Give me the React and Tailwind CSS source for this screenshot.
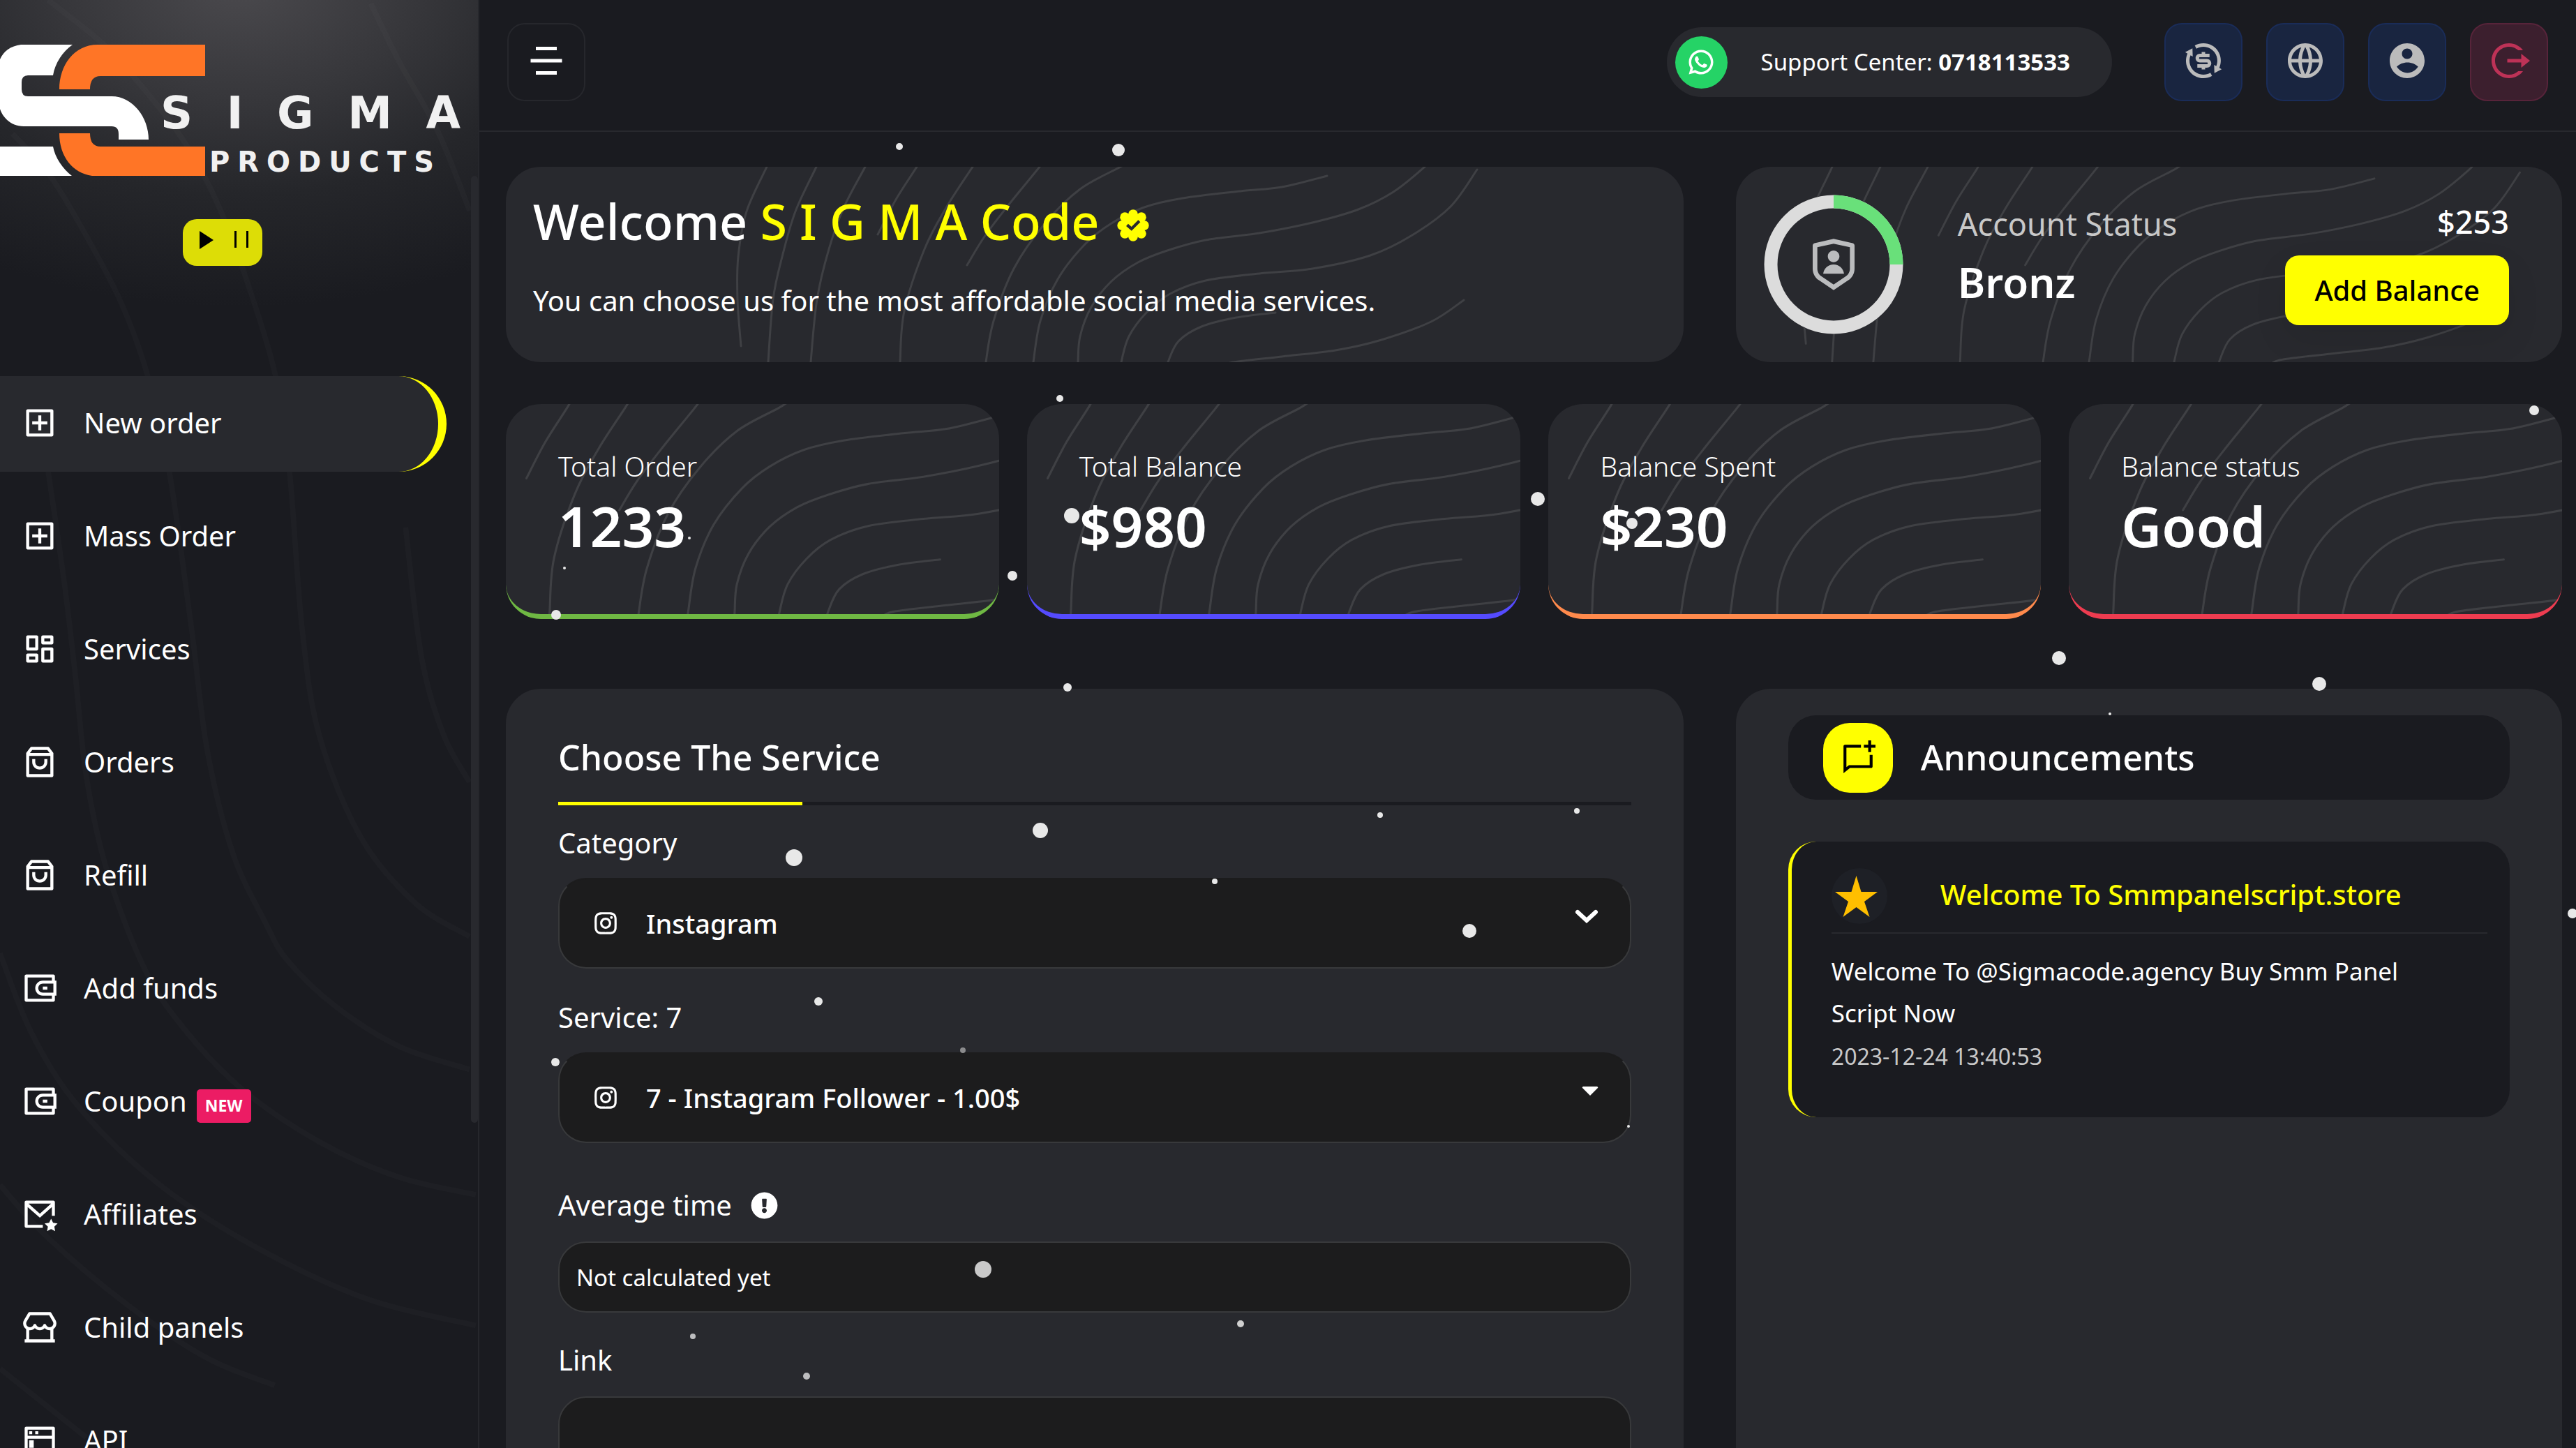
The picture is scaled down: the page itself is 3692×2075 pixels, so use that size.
import React from "react";
import {
  RiAddBoxLine, RiDashboardLine, RiShoppingBag3Line, RiWallet3Line, RiMailStarLine, RiStore2Line,
  RiTerminalWindowLine, RiMenu5Fill, RiWhatsappLine, RiExchangeDollarLine, RiGlobalLine, RiAccountCircleFill,
  RiLogoutCircleRLine, RiShieldUserLine, RiChatNewLine, RiInstagramLine,
} from "react-icons/ri";
import { FaExclamationCircle } from "react-icons/fa";

function smooth(points) {
  let d = `M${points[0][0]} ${points[0][1]}`;
  for (let i = 0; i < points.length - 1; i++) {
    const p0 = points[i - 1] || points[i];
    const p1 = points[i];
    const p2 = points[i + 1];
    const p3 = points[i + 2] || p2;
    d += ` C${p1[0] + (p2[0] - p0[0]) / 6} ${p1[1] + (p2[1] - p0[1]) / 6} ${p2[0] - (p3[0] - p1[0]) / 6} ${p2[1] - (p3[1] - p1[1]) / 6} ${p2[0]} ${p2[1]}`;
  }
  return d;
}

const CARD_LINES = [
  [[-465, -152], [-470, -140], [-499, -76], [-511, -11], [-512, 50], [-507, 117]],
  [[-394, -152], [-399, -140], [-429, -76], [-448, -11], [-461, 50], [-468, 140], [-468, 152]],
  [[-324, -152], [-329, -140], [-359, -83], [-381, -22], [-398, 50], [-407, 140], [-407, 152]],
  [[-249, -152], [-255, -140], [-285, -93], [-311, -43]],
  [[-168, -152], [-175, -140], [-212, -83], [-244, -22], [-273, 67], [-279, 140], [-279, 152]],
  [[-71, -152], [-79, -140], [-123, -86], [-158, -40], [-183, 1]],
  [[53, -151], [37, -140], [-21, -108], [-72, -58], [-116, 6], [-145, 81], [-156, 140], [-156, 152]],
  [[333, -127], [268, -111], [208, -105], [126, -95], [71, -82], [24, -59], [-14, -29], [-53, 21], [-78, 81], [-88, 140], [-89, 152]],
  [[480, -150], [473, -140], [428, -104], [378, -79], [312, -60], [236, -45], [159, -35], [104, -20], [62, -3], [24, 24], [-5, 61], [-21, 103], [-24, 140], [-24, 152]],
  [[548, -136], [510, -83], [455, -42], [395, -13], [312, 6], [236, 13], [159, 23], [108, 42], [75, 68], [49, 103], [38, 140], [37, 152]],
  [[259, 69], [203, 76], [153, 89], [120, 110], [105, 140], [103, 152]],
  [[529, 51], [482, 82], [411, 108], [345, 123], [268, 132], [194, 141], [175, 152]],
];

const SIDE_LINES = [
  [[69, 0], [147, 62], [197, 116], [257, 192], [294, 254], [321, 312], [354, 401], [395, 536], [416, 676], [434, 901], [459, 1057], [519, 1204], [597, 1298], [675, 1346]],
  [[533, 5], [574, 89], [629, 188], [675, 303]],
  [[18, 192], [73, 254], [129, 348], [175, 437], [211, 536], [243, 676], [275, 901], [298, 1079], [335, 1227], [381, 1325], [413, 1380], [482, 1446], [574, 1504], [675, 1537]],
  [[69, 676], [92, 834], [108, 968], [124, 1115], [152, 1245], [202, 1380], [253, 1464], [344, 1562], [459, 1641], [574, 1692], [684, 1717]],
  [[0, 1370], [46, 1486], [115, 1593], [230, 1703], [367, 1792], [528, 1867], [684, 1905]],
  [[0, 1703], [69, 1779], [184, 1876], [298, 1952], [395, 1991]],
  [[0, 1967], [69, 2022], [124, 2066]],
  [[583, 758], [606, 945], [638, 1057], [675, 1124]],
];

const SNOW = [
  [1289, 210, 5], [1603, 215, 9], [1519, 571, 5], [1536, 739, 11], [1451, 825, 7], [988, 771, 2], [809, 814, 2],
  [797, 881, 7], [1530, 985, 6], [2204, 715, 10], [2339, 750, 8], [2951, 943, 10], [3324, 980, 10], [3632, 588, 7],
  [1138, 1229, 12], [1491, 1190, 11], [1173, 1435, 6], [1380, 1505, 4, "#8b8b8d"], [796, 1522, 6],
  [1409, 1819, 12, "#c9c9c9"], [993, 1915, 4, "#bdbdbf"], [1156, 1972, 5, "#bdbdbf"], [1978, 1168, 4], [2260, 1162, 4],
  [1741, 1263, 4], [2106, 1334, 10], [1778, 1897, 5, "#d0d0d0"], [2334, 1614, 2], [3024, 1023, 2], [3687, 1309, 7],
];

const NAV = [
  ["New order", RiAddBoxLine], ["Mass Order", RiAddBoxLine], ["Services", RiDashboardLine], ["Orders", RiShoppingBag3Line],
  ["Refill", RiShoppingBag3Line], ["Add funds", RiWallet3Line], ["Coupon", RiWallet3Line, "NEW"],
  ["Affiliates", RiMailStarLine], ["Child panels", RiStore2Line], ["API", RiTerminalWindowLine],
];

const STATS = [
  ["Total Order", "1233", "border-[#6fb843]"], ["Total Balance", "$980", "border-[#554bff]"],
  ["Balance Spent", "$230", "border-[#ff8a4c]"], ["Balance status", "Good", "border-[#ee3c50]"],
];

function Contours({ className }) {
  return (
    <svg viewBox="-600 -160 1200 320" aria-hidden="true" className={`pointer-events-none absolute top-1/2 left-1/2 max-w-none -translate-x-1/2 -translate-y-1/2 ${className}`}>
      <g fill="none" stroke="#3f4044" strokeWidth="3" strokeLinecap="round">
        {CARD_LINES.map((l, i) => <path key={i} d={smooth(l)} />)}
      </g>
    </svg>
  );
}

function VerifiedBadge({ className }) {
  const lobes = [[0, -48], [0, 48], [-48, 0], [48, 0], [36, 36], [-36, 36], [36, -36], [-36, -36]];
  return (
    <svg viewBox="-70 -70 140 140" aria-hidden="true" className={className}>
      <g fill="#ffff00">
        <circle r="52" />
        {lobes.map(([x, y]) => <circle key={`${x},${y}`} cx={x} cy={y} r="21" />)}
      </g>
      <path d="M-26 -2L-7 15L27 -19" fill="none" stroke="#28292e" strokeWidth="13" />
    </svg>
  );
}

function Letters({ text, className }) {
  return (
    <span className={`flex justify-between ${className}`}>
      {text.split("").map((c, i) => <span key={i}>{c}</span>)}
    </span>
  );
}

function Sidebar() {
  return (
    <aside className="relative flex h-full w-[687px] shrink-0 flex-col overflow-hidden border-r-2 border-[#26272c] bg-[#1a1b20] bg-[radial-gradient(ellipse_720px_460px_at_50%_-20px,#4a494d_0%,#37373b_35%,#25262a_65%,#1a1b20_100%)]">
      <svg viewBox="0 0 687 2075" aria-hidden="true" className="pointer-events-none absolute top-0 left-0 w-full">
        <g fill="none" stroke="#ffffff" strokeOpacity="0.02" strokeWidth="8">
          {SIDE_LINES.map((l, i) => <path key={i} d={smooth(l)} />)}
        </g>
      </svg>
      <div className="absolute top-[252px] right-0 h-[1357px] w-[10px] rounded-full bg-[#28292e]" />
      <a href="#home" aria-label="Sigma Products" className="relative mt-[64px] flex h-[188px] items-start text-[#f1f1f1]">
        <svg viewBox="0 0 294 188" aria-hidden="true" className="h-[188px] w-[294px] shrink-0">
          <path fill="#fff" d="M30 0H104C90 10 79 26 76 44H40Q31 44 31 54V64Q31 74 40 74H160C190 74 213 104 213 136H170V128Q170 117 160 117H34C14 117 3 102 0 92V21Q8 3 30 0Z" />
          <path fill="#fff" d="M0 146H76C79 162 90 178 103 188H0Z" />
          <path fill="#ff7526" d="M140 0H294V45H144Q129 45 129 64H85C85 30 106 0 140 0Z" />
          <path fill="#ff7526" d="M85 127H129Q129 146 144 146H294V188H132C104 184 85 160 85 127Z" />
        </svg>
        <span className="absolute top-[72px] left-[230px] flex w-[430px] flex-col font-['DejaVu_Sans'] font-bold">
          <Letters text="SIGMA" className="text-[64px] leading-[52px]" />
          <Letters text="PRODUCTS" className="mt-[24px] ml-[70px] w-[322px] text-[40px] leading-[40px]" />
        </span>
      </a>
      <button type="button" aria-label="Play or pause" className="relative mt-[62px] ml-[262px] flex h-[67px] w-[114px] shrink-0 items-start gap-[30px] rounded-[20px] bg-[#dddd06] pt-[17px] pl-[24px]">
        <svg viewBox="0 0 20 26" className="h-[26px] w-[20px]"><path d="M0 0L20 13L0 26Z" /></svg>
        <svg viewBox="0 0 20 24" className="h-[24px] w-[20px]"><path d="M0 0H3V24H0ZM17 0H20V24H17Z" /></svg>
      </button>
      <nav className="relative mt-[158px] flex flex-col gap-[25px]">
        {NAV.map(([label, Icon, badge], i) => (
          <a key={label} href="#nav" className={`flex h-[137px] w-[640px] shrink-0 items-center pb-[3px] pl-[31px] text-[40px] text-white ${i === 0 ? "rounded-r-full border-r-[12px] border-[#ffff00] bg-[#28292e]" : ""}`}>
            <Icon className="mr-[37px] size-[52px]" />
            {label}
            {badge && <span className="mt-[13px] ml-[14px] flex h-[48px] items-center rounded-[5px] bg-[#ec1c64] px-[12px] text-[23px] font-bold">{badge}</span>}
          </a>
        ))}
      </nav>
    </aside>
  );
}

function HeaderButton({ Icon, label, className }) {
  return (
    <button type="button" aria-label={label} className={`flex size-[112px] items-center justify-center rounded-[25px] border-2 pb-[4px] ${className}`}>
      <Icon className="size-[60px]" />
    </button>
  );
}

function Header() {
  const blue = "border-[#1a2c58] bg-[#192540] text-[#bbbbbb]";
  return (
    <header className="flex h-[189px] shrink-0 items-center justify-between border-b-2 border-[#28292e] px-[40px] pb-[9px]">
      <HeaderButton Icon={RiMenu5Fill} label="Menu" className="border-[#26272c] text-white" />
      <div className="flex items-center gap-[34px]">
        <a href="#support" className="mr-[41px] flex h-[100px] items-center gap-[48px] rounded-full bg-[#28292e] pr-[60px] pl-[12px] text-[33px] text-white">
          <span className="flex size-[75px] items-center justify-center rounded-full bg-[#25d366]"><RiWhatsappLine className="size-[42px]" /></span>
          <span>Support Center: <b className="font-bold">0718113533</b></span>
        </a>
        <HeaderButton Icon={RiExchangeDollarLine} label="Currency" className={blue} />
        <HeaderButton Icon={RiGlobalLine} label="Language" className={blue} />
        <HeaderButton Icon={RiAccountCircleFill} label="Account" className={blue} />
        <HeaderButton Icon={RiLogoutCircleRLine} label="Log out" className="border-[#57243a] bg-[#3c1f2e] text-[#be3257]" />
      </div>
    </header>
  );
}

const field = "flex w-full items-center rounded-[40px] border-2 border-[#38393b] bg-[#1c1c1d]";

function SelectField({ id, label, value, arrow }) {
  return (
    <>
      <label htmlFor={id} className="block text-[40px] leading-[60px]">{label}</label>
      <div className={`${field} relative mt-[20px] h-[130px] border-t-[#1c1c1d] pl-[47px]`}>
        <RiInstagramLine className="size-[38px]" />
        <select id={id} className="h-full flex-1 appearance-none bg-transparent pl-[39px] text-[38px] font-medium outline-none">
          <option>{value}</option>
        </select>
        <div className="pointer-events-none absolute right-[45px] mb-[20px]">{arrow}</div>
      </div>
    </>
  );
}

function OrderForm() {
  return (
    <form className="col-span-7 rounded-t-[50px] bg-[#28292e] px-[75px] pt-[60px] text-white">
      <h2 className="text-[50px] leading-[76px] font-medium">Choose The Service</h2>
      <div className="mt-[26px] mb-[24px] h-[5px] bg-[#1a1b20]"><div className="h-full w-[350px] bg-[#ffff00]" /></div>
      <SelectField id="category" label="Category" value="Instagram" arrow={
        <svg viewBox="0 0 34 20" className="w-[34px]"><path d="M4 4L17 16L30 4" fill="none" stroke="#fff" strokeWidth="6" strokeLinecap="round" /></svg>
      } />
      <div className="h-[40px]" />
      <SelectField id="service" label="Service: 7" value="7 - Instagram Follower - 1.00$" arrow={
        <svg viewBox="0 0 24 13" className="w-[24px]"><path d="M2 0H22Q24 1 23 2L12 13L1 2Q0 1 2 0Z" fill="#fff" /></svg>
      } />
      <label htmlFor="avg" className="mt-[59px] flex items-center gap-[27px] text-[40px] leading-[60px]">Average time <FaExclamationCircle className="size-[39px]" /></label>
      <input id="avg" readOnly value="Not calculated yet" className={`${field} mt-[22px] h-[102px] px-[24px] text-[33px] outline-none`} />
      <label htmlFor="link" className="mt-[38px] block text-[40px] leading-[60px]">Link</label>
      <input id="link" className={`${field} mt-[22px] h-[130px] px-[24px] text-[33px] outline-none`} />
    </form>
  );
}

function Announcements() {
  return (
    <section className="col-span-5 rounded-t-[50px] bg-[#28292e] px-[75px] pt-[38px] text-white">
      <div className="flex h-[121px] items-center gap-[40px] rounded-[40px] bg-[#1a1b20] pl-[50px]">
        <span className="flex size-[100px] items-center justify-center rounded-[38px] bg-[#ffff00] text-black"><RiChatNewLine className="size-[50px]" /></span>
        <h2 className="text-[50px] font-medium">Announcements</h2>
      </div>
      <article className="mt-[60px] h-[395px] rounded-[40px] border-l-[5px] border-[#ffff00] bg-[#1a1b20] pt-[38px] pr-[32px] pl-[57px]">
        <div className="flex h-[94px] items-start border-b-2 border-[#28292e]">
          <span className="flex size-[80px] items-center justify-center rounded-full bg-[#1e2026] pr-[9px]">
            <svg viewBox="0 0 61 59" className="w-[61px]"><path fill="#ffbf00" d="M30.500 0L37.500 23H61L42 37L49.500 59L30.500 45L11.500 59L19 37L0 23H23.500Z" /></svg>
          </span>
          <h3 className="ml-[76px] text-[40px] leading-[76px] font-medium text-[#ffff00]">Welcome To Smmpanelscript.store</h3>
        </div>
        <p className="mt-[24px] pr-[40px] text-[35px] leading-[60px]">Welcome To @Sigmacode.agency Buy Smm Panel Script Now</p>
        <time className="mt-[2px] block text-[32px] leading-[60px] text-[#c8c8c8]">2023-12-24 13:40:53</time>
      </article>
    </section>
  );
}

export default function App() {
  return (
    <div className="relative flex h-screen w-full overflow-hidden bg-[#1a1b20] font-['Noto_Sans',sans-serif]">
      <Sidebar />
      <main className="flex min-w-0 flex-1 flex-col">
        <Header />
        <div className="flex flex-1 flex-col pt-[50px] pr-[20px] pl-[38px] text-white">
          <div className="grid shrink-0 grid-cols-12 gap-[75px]">
            <section className="relative col-span-7 h-[280px] overflow-hidden rounded-[50px] bg-[#28292e] px-[39px] pt-[26px]">
              <Contours className="w-[1200px]" />
              <h1 className="relative flex items-center text-[70px] leading-[104px] font-medium">
                <span>Welcome <span className="text-[#ffff00]">S I G M A Code</span></span>
                <VerifiedBadge className="mt-[12px] ml-[26px] size-[46px]" />
              </h1>
              <p className="relative mt-[32px] text-[40px] leading-[60px]">You can choose us for the most affordable social media services.</p>
            </section>
            <section className="relative col-span-5 flex h-[280px] items-center overflow-hidden rounded-[50px] bg-[#28292e] pr-[76px] pl-[40px]">
              <Contours className="w-[1164px]" />
              <div className="relative flex size-[200px] items-center justify-center rounded-full bg-[#28292e] text-[#bbbcbe]">
                <svg viewBox="0 0 200 200" className="absolute inset-0" fill="none" strokeWidth="19">
                  <circle cx="100" cy="100" r="90" stroke="#dcdcdc" />
                  <path d="M100 10A90 90 0 0 1 190 100" stroke="#69e07a" />
                </svg>
                <RiShieldUserLine className="size-[80px]" />
              </div>
              <div className="relative ml-[78px] flex-1 pb-[26px]">
                <div className="text-[45px] leading-[68px] text-[#c8c8c8]">Account Status</div>
                <div className="mt-[8px] text-[60px] leading-[82px] font-semibold">Bronz</div>
              </div>
              <div className="relative flex flex-col items-end">
                <div className="text-[45px] leading-[68px] font-medium">$253</div>
                <button type="button" className="mt-[14px] mb-[8px] h-[100px] rounded-[20px] bg-[#ffff00] px-[42px] text-[40px] font-medium text-black shadow-[0_20px_50px_rgba(0,0,0,0.08)]">Add Balance</button>
              </div>
            </section>
          </div>
          <div className="mt-[60px] grid shrink-0 grid-cols-4 gap-[40px]">
            {STATS.map(([label, value, color]) => (
              <section key={label} className={`relative h-[308px] overflow-hidden rounded-[50px] border-b-[7px] bg-[#28292e] pt-[59px] pl-[75px] ${color}`}>
                <Contours className="w-[1248px]" />
                <div className="relative text-[39px] leading-[60px] font-light">{label}</div>
                <div className="relative text-[80px] leading-[110px] font-semibold">{value}</div>
              </section>
            ))}
          </div>
          <div className="mt-[100px] grid flex-1 grid-cols-12 gap-[75px]">
            <OrderForm />
            <Announcements />
          </div>
        </div>
      </main>
      <svg viewBox="0 0 3692 2075" aria-hidden="true" preserveAspectRatio="xMinYMin slice" className="pointer-events-none absolute inset-0 h-full w-full">
        {SNOW.map(([x, y, r, fill = "#e8e8e8"], i) => <circle key={i} cx={x} cy={y} r={r} fill={fill} />)}
      </svg>
    </div>
  );
}
